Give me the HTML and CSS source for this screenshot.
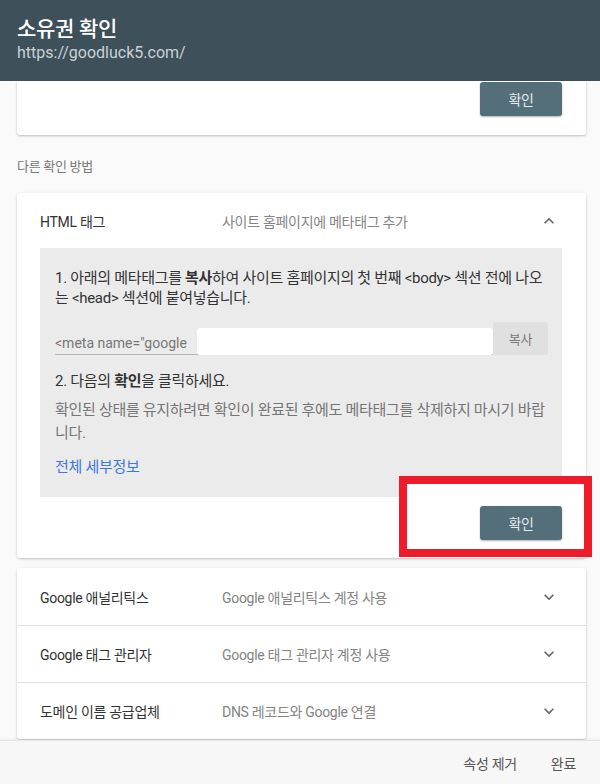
FILE: index.html
```html
<!DOCTYPE html>
<html lang="ko">
<head>
  <meta charset="UTF-8">
  <meta name="viewport" content="width=device-width, initial-scale=1.0">
  <title>소유권 확인</title>
  <link rel="stylesheet" href="styles.css">
</head>
<body>
  <header class="topbar">
    <h1 class="topbar-title">소유권 확인</h1>
    <div class="topbar-url">https://goodluck5.com/</div>
  </header>

  <main class="content">
    <section class="card card-top">
      <button class="btn-verify">확인</button>
    </section>

    <div class="section-label">다른 확인 방법</div>

    <section class="card method">
      <div class="method-head">
        <span class="m-title">HTML 태그</span>
        <span class="m-desc">사이트 홈페이지에 메타태그 추가</span>
        <svg class="chev" viewBox="0 0 24 24"><path d="M7.41 15.41L12 10.83l4.59 4.58L18 14l-6-6-6 6z"/></svg>
      </div>
      <div class="method-body">
        <p class="step">1. 아래의 메타태그를 <b>복사</b>하여 사이트 홈페이지의 첫 번째 &lt;body&gt; 섹션 전에 나오는 &lt;head&gt; 섹션에 붙여넣습니다.</p>
        <div class="meta-row">
          <div class="meta-field">
            <span class="meta-text">&lt;meta name="google</span>
            <span class="redact"></span>
          </div>
          <button class="btn-copy">복사</button>
        </div>
        <p class="step step-2">2. 다음의 <b>확인</b>을 클릭하세요.</p>
        <p class="note">확인된 상태를 유지하려면 확인이 완료된 후에도 메타태그를 삭제하지 마시기 바랍니다.</p>
        <a class="details" href="#">전체 세부정보</a>
      </div>
      <div class="method-foot">
        <div class="highlight"></div>
        <button class="btn-verify">확인</button>
      </div>
    </section>

    <section class="card method-list">
      <div class="method-head row">
        <span class="m-title">Google 애널리틱스</span>
        <span class="m-desc">Google 애널리틱스 계정 사용</span>
        <svg class="chev" viewBox="0 0 24 24"><path d="M16.59 8.59L12 13.17 7.41 8.59 6 10l6 6 6-6z"/></svg>
      </div>
      <div class="method-head row">
        <span class="m-title">Google 태그 관리자</span>
        <span class="m-desc">Google 태그 관리자 계정 사용</span>
        <svg class="chev" viewBox="0 0 24 24"><path d="M16.59 8.59L12 13.17 7.41 8.59 6 10l6 6 6-6z"/></svg>
      </div>
      <div class="method-head row">
        <span class="m-title">도메인 이름 공급업체</span>
        <span class="m-desc">DNS 레코드와 Google 연결</span>
        <svg class="chev" viewBox="0 0 24 24"><path d="M16.59 8.59L12 13.17 7.41 8.59 6 10l6 6 6-6z"/></svg>
      </div>
    </section>
  </main>

  <footer class="bottombar">
    <button class="btn-text">속성 제거</button>
    <button class="btn-text">완료</button>
  </footer>
</body>
</html>
```

FILE: styles.css
```css
* {
  box-sizing: border-box;
}
html, body {
  margin: 0;
  height: 784px;
  overflow: hidden;
}
body {
  font-family: Roboto, "Noto Sans CJK KR", sans-serif;
  background: #fafafa;
  color: #333;
  display: flex;
  flex-direction: column;
  letter-spacing: -0.3px;
}
button {
  font-family: inherit;
  letter-spacing: inherit;
  border: none;
  cursor: pointer;
}

/* top bar */
.topbar {
  height: 81px;
  flex: none;
  background: #3e505a;
  padding: 17px 17px 0;
}
.topbar-title {
  margin: 0;
  font-size: 21px;
  line-height: 24px;
  font-weight: 500;
  color: #fff;
}
.topbar-url {
  margin-top: 1px;
  font-size: 16px;
  line-height: 22px;
  color: #c9d1d5;
  letter-spacing: 0;
}

.content {
  flex: 1;
  overflow: hidden;
  padding: 0 14px 0 17px;
}

.card {
  background: #fff;
  border-radius: 3px;
  box-shadow: 0 1px 2px rgba(0,0,0,0.18), 0 1px 4px rgba(0,0,0,0.08);
}
.card-top {
  border-radius: 0 0 3px 3px;
  padding: 1px 24px 19px;
  display: flex;
  justify-content: flex-end;
}

.btn-verify {
  width: 82px;
  height: 34px;
  background: #546e7a;
  color: #e3e9ec;
  font-size: 14px;
  border-radius: 3px;
  box-shadow: 0 1px 2px rgba(0,0,0,0.3);
  position: relative;
  z-index: 2;
}

.section-label {
  margin: 22px 0 16px;
  font-size: 13px;
  line-height: 20px;
  color: #777;
}

/* method rows */
.method-head {
  height: 55px;
  display: flex;
  align-items: center;
  padding: 0 24px 0 23px;
  font-size: 14px;
}
.m-title {
  width: 182px;
  color: #333;
}
.m-desc {
  flex: 1;
  color: #848484;
}
.chev {
  width: 20px;
  height: 20px;
  fill: #666;
  margin-right: 3px;
}

.method-body {
  margin: 0 24px 0 23px;
  background: #ebebeb;
  padding: 20px 14px 20px 15px;
  font-size: 15px;
}
.step {
  margin: 0;
  line-height: 20px;
  color: #333;
}
.step b {
  font-weight: 700;
}
.meta-row {
  margin-top: 14px;
  display: flex;
  align-items: flex-end;
}
.meta-field {
  flex: 1;
  height: 33px;
  border-bottom: 1px solid #b5b5b5;
  display: flex;
  align-items: flex-end;
  padding-bottom: 3px;
  position: relative;
}
.meta-text {
  font-size: 14px;
  color: #777;
  letter-spacing: 0;
}
.redact {
  position: absolute;
  left: 142px;
  right: 0;
  top: 6px;
  bottom: -1px;
  background: #fff;
  border-radius: 3px;
}
.btn-copy {
  width: 55px;
  height: 33px;
  background: #e0e0e0;
  color: #7a7a7a;
  font-size: 13px;
  border-radius: 3px;
}
.step-2 {
  margin-top: 16px;
}
.note {
  margin: 8px 0 0;
  line-height: 23px;
  color: #757575;
}
.details {
  display: block;
  margin-top: 12px;
  line-height: 20px;
  color: #3b78e0;
  text-decoration: none;
}

.method-foot {
  height: 61px;
  padding: 9px 24px 0 0;
  display: flex;
  justify-content: flex-end;
  align-items: flex-start;
  position: relative;
}
.highlight {
  position: absolute;
  left: 382px;
  right: -6px;
  top: -21px;
  bottom: 1px;
  border: 8px solid #ee1c2b;
  background: #fff;
  z-index: 1;
}

.method-list {
  margin-top: 10px;
}
.method-list .row {
  height: 57px;
  border-top: 1px solid #e2e2e2;
}
.method-list .row:first-child {
  border-top: none;
}

/* bottom bar */
.bottombar {
  height: 44px;
  flex: none;
  background: #f7f7f7;
  border-top: 1px solid #e6e6e6;
  box-shadow: 0 -1px 3px rgba(0,0,0,0.06);
  display: flex;
  justify-content: flex-end;
  align-items: center;
  padding-right: 24px;
  gap: 34px;
}
.btn-text {
  background: none;
  padding: 0;
  font-size: 14px;
  color: #555;
}
```
